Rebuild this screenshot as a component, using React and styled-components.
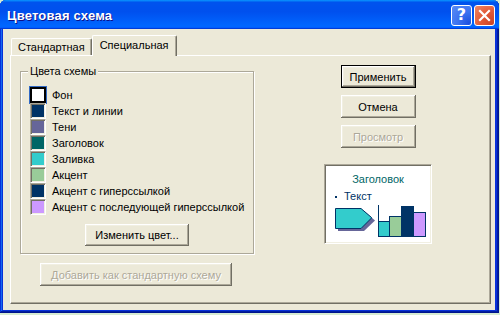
import React from 'react'
import styled, { createGlobalStyle } from 'styled-components'

const GlobalStyle = createGlobalStyle`
  html, body {
    margin: 0;
    padding: 0;
  }
  body {
    width: 500px;
    height: 315px;
    overflow: hidden;
    background: #d6ebd2;
    font-family: "Liberation Sans", Arial, sans-serif;
    font-size: 11px;
    color: #000;
  }
`

const colors = [
	{ name: 'Фон', color: '#ffffff', selected: true },
	{ name: 'Текст и линии', color: '#003366' },
	{ name: 'Тени', color: '#666699' },
	{ name: 'Заголовок', color: '#006666' },
	{ name: 'Заливка', color: '#33cccc' },
	{ name: 'Акцент', color: '#99cc99' },
	{ name: 'Акцент с гиперссылкой', color: '#003366' },
	{ name: 'Акцент с последующей гиперссылкой', color: '#cc99ff' },
]

const App = () => (
	<>
		<GlobalStyle />
		<Window>
			<TitleBar>
				<Title>Цветовая схема</Title>
				<Controls>
					<HelpButton>?</HelpButton>
					<CloseButton>
						<svg width="13" height="13" viewBox="0 0 13 13">
							<path d="M2 2 L11 11 M11 2 L2 11" stroke="#fff" strokeWidth="2.2" strokeLinecap="square" />
						</svg>
					</CloseButton>
				</Controls>
			</TitleBar>
			<Client>
				<TabStrip>
					<Tab>Стандартная</Tab>
					<Tab $active>Специальная</Tab>
				</TabStrip>
				<Panel>
					<LeftColumn>
						<GroupBox>
							<GroupLabel>Цвета схемы</GroupLabel>
							<ColorList>
								{colors.map((c) => (
									<ColorRow key={c.name}>
										<Swatch $color={c.color} $selected={c.selected} />
										<span>{c.name}</span>
									</ColorRow>
								))}
							</ColorList>
							<ChangeButton>Изменить цвет...</ChangeButton>
						</GroupBox>
						<AddButton disabled>Добавить как стандартную схему</AddButton>
					</LeftColumn>
					<RightColumn>
						<Button $default>Применить</Button>
						<Button>Отмена</Button>
						<Button disabled>Просмотр</Button>
						<Preview>
							<PreviewTitle>Заголовок</PreviewTitle>
							<PreviewBullet>
								<Dot />
								Текст
							</PreviewBullet>
							<svg width="93" height="35" viewBox="0 0 93 35">
								<path d="M3 8 H29 L40 17.5 L29 28 H3 Z" fill="#666699" />
								<path d="M0.5 5.5 H26 L36.5 14.5 V15 L26 25.5 H0.5 Z" fill="#33cccc" stroke="#003366" />
								<rect x="43.5" y="18.5" width="11" height="15" fill="#33cccc" stroke="#003366" />
								<rect x="54.5" y="13.5" width="12" height="20" fill="#99cc99" stroke="#003366" />
								<rect x="66.5" y="3.5" width="12" height="30" fill="#003366" stroke="#003366" />
								<rect x="78.5" y="9.5" width="12" height="24" fill="#cc99ff" stroke="#003366" />
								<path d="M43.5 2 V33.5 H91" fill="none" stroke="#003366" />
							</svg>
						</Preview>
					</RightColumn>
				</Panel>
			</Client>
		</Window>
	</>
)

export default App

const Window = styled.div`
  width: 499px;
  height: 313px;
  display: flex;
  flex-direction: column;
  background: #0831d9;
  border-radius: 6px 6px 0 0;
  overflow: hidden;
  box-shadow: inset -1px -1px #00138c, inset 1px 0 #0831d9, inset -2px -2px #001ea0,
    inset 2px 0 #166aee;
`

const TitleBar = styled.div`
  height: 29px;
  flex: none;
  display: flex;
  align-items: center;
  justify-content: space-between;
  padding: 1px 4px 0 7px;
  box-sizing: border-box;
  background: linear-gradient(
    180deg,
    #0997ff 0%,
    #0053ee 8%,
    #0050ee 40%,
    #06f 88%,
    #06f 93%,
    #005bff 95%,
    #003dd7 96%,
    #003dd7 100%
  );
`

const Title = styled.div`
  color: #fff;
  font-weight: bold;
  font-size: 13px;
  letter-spacing: 0.2px;
  text-shadow: 1px 1px #0f1089;
`

const Controls = styled.div`
  display: flex;
  gap: 2px;
`

const TitleButton = styled.div`
  width: 21px;
  height: 21px;
  box-sizing: border-box;
  border: 1px solid #fff;
  border-radius: 3px;
  display: flex;
  align-items: center;
  justify-content: center;
  color: #fff;
`

const HelpButton = styled(TitleButton)`
  background: radial-gradient(circle at 90% 90%, #1c50e0 0%, #3b72f0 45%, #5b8cf5 100%);
  font-weight: bold;
  font-size: 16px;
  font-family: "DejaVu Sans", sans-serif;
  line-height: 1;
`

const CloseButton = styled(TitleButton)`
  background: radial-gradient(circle at 90% 90%, #cc4628 0%, #e25a38 50%, #ef8866 100%);
`

const Client = styled.div`
  flex: 1;
  margin: 0 4px 3px 3px;
  background: #ece9d8;
  padding: 6px 4px 6px 7px;
  display: flex;
  flex-direction: column;
`

const TabStrip = styled.div`
  display: flex;
  align-items: flex-end;
  padding-left: 1px;
  height: 20px;
`

const Tab = styled.div`
  position: relative;
  z-index: ${(p) => (p.$active ? 1 : 0)};
  box-sizing: border-box;
  height: ${(p) => (p.$active ? '21px' : '17px')};
  margin-bottom: ${(p) => (p.$active ? '-1px' : '0')};
  padding: ${(p) => (p.$active ? '2px 7px 0 7px' : '1px 6px 0 6px')};
  line-height: 14px;
  background: #ece9d8;
  border-top: 1px solid #fff;
  border-left: 1px solid #fff;
  border-right: 1px solid #716f64;
  border-radius: 2px 2px 0 0;
  box-shadow: inset -1px 0 #aca899;
`

const Panel = styled.div`
  flex: 1;
  display: grid;
  grid-template-columns: 234px 224px;
  column-gap: 12px;
  align-items: start;
  padding: 9px 0 0 9px;
  border: 1px solid;
  border-color: #fff #716f64 #716f64 #fff;
  box-shadow: inset -1px -1px #aca899;
`

const LeftColumn = styled.div`
  display: flex;
  flex-direction: column;
`

const GroupBox = styled.div`
  margin-top: 6px;
  border: 1px solid #aca899;
  box-shadow: inset 1px 1px #fff, 1px 1px #fff;
  padding: 0 0 7px 9px;
  display: flex;
  flex-direction: column;
`

const GroupLabel = styled.div`
  align-self: flex-start;
  margin: -7px 0 0 -2px;
  padding: 0 2px;
  line-height: 13px;
  background: #ece9d8;
`

const ColorList = styled.div`
  margin-top: 9px;
  display: flex;
  flex-direction: column;
`

const ColorRow = styled.div`
  height: 16px;
  display: flex;
  align-items: center;
  gap: 6px;
  white-space: nowrap;
`

const Swatch = styled.div`
  width: 16px;
  height: 16px;
  flex: none;
  box-sizing: border-box;
  background: ${(p) => p.$color};
  ${(p) =>
		p.$selected
			? `
    border: 2px solid #000;
    outline: 1px solid #316ac5;
  `
			: `
    border: 1px solid;
    border-color: #aca899 #fff #fff #aca899;
    box-shadow: inset 1px 1px #716f64, inset -1px -1px #f1efe2;
  `}
`

const Button = styled.button`
  width: 75px;
  height: 23px;
  box-sizing: border-box;
  padding: 0;
  margin: 0;
  font: inherit;
  color: #000;
  background: #ece9d8;
  border: ${(p) => (p.$default ? '1px solid #000' : 'none')};
  box-shadow: inset -1px -1px #716f64, inset 1px 1px #fff, inset -2px -2px #aca899,
    inset 2px 2px #f1efe2;

  &:disabled {
    color: #aca899;
    text-shadow: 1px 1px #fff;
  }
`

const ChangeButton = styled(Button)`
  width: 104px;
  height: 22px;
  margin-top: 9px;
  align-self: center;
  margin-left: -9px;
`

const AddButton = styled(Button)`
  width: 192px;
  margin: 9px 0 0 20px;
`

const RightColumn = styled.div`
  display: flex;
  flex-direction: column;
  align-items: center;
  gap: 7px;
`

const Preview = styled.div`
  margin-top: 9px;
  width: 108px;
  height: 80px;
  box-sizing: border-box;
  background: #fff;
  border: 1px solid;
  border-color: #aca899 #fff #fff #aca899;
  box-shadow: inset 1px 1px #716f64, inset -1px -1px #f1efe2;
  padding: 8px 0 0 10px;
  display: flex;
  flex-direction: column;
`

const PreviewTitle = styled.div`
  color: #006666;
  text-align: center;
  line-height: 13px;
  margin-left: -10px;
`

const PreviewBullet = styled.div`
  display: flex;
  align-items: center;
  gap: 7px;
  margin-top: 4px;
  line-height: 13px;
  color: #003366;
`

const Dot = styled.span`
  width: 2px;
  height: 2px;
  background: #003366;
`
